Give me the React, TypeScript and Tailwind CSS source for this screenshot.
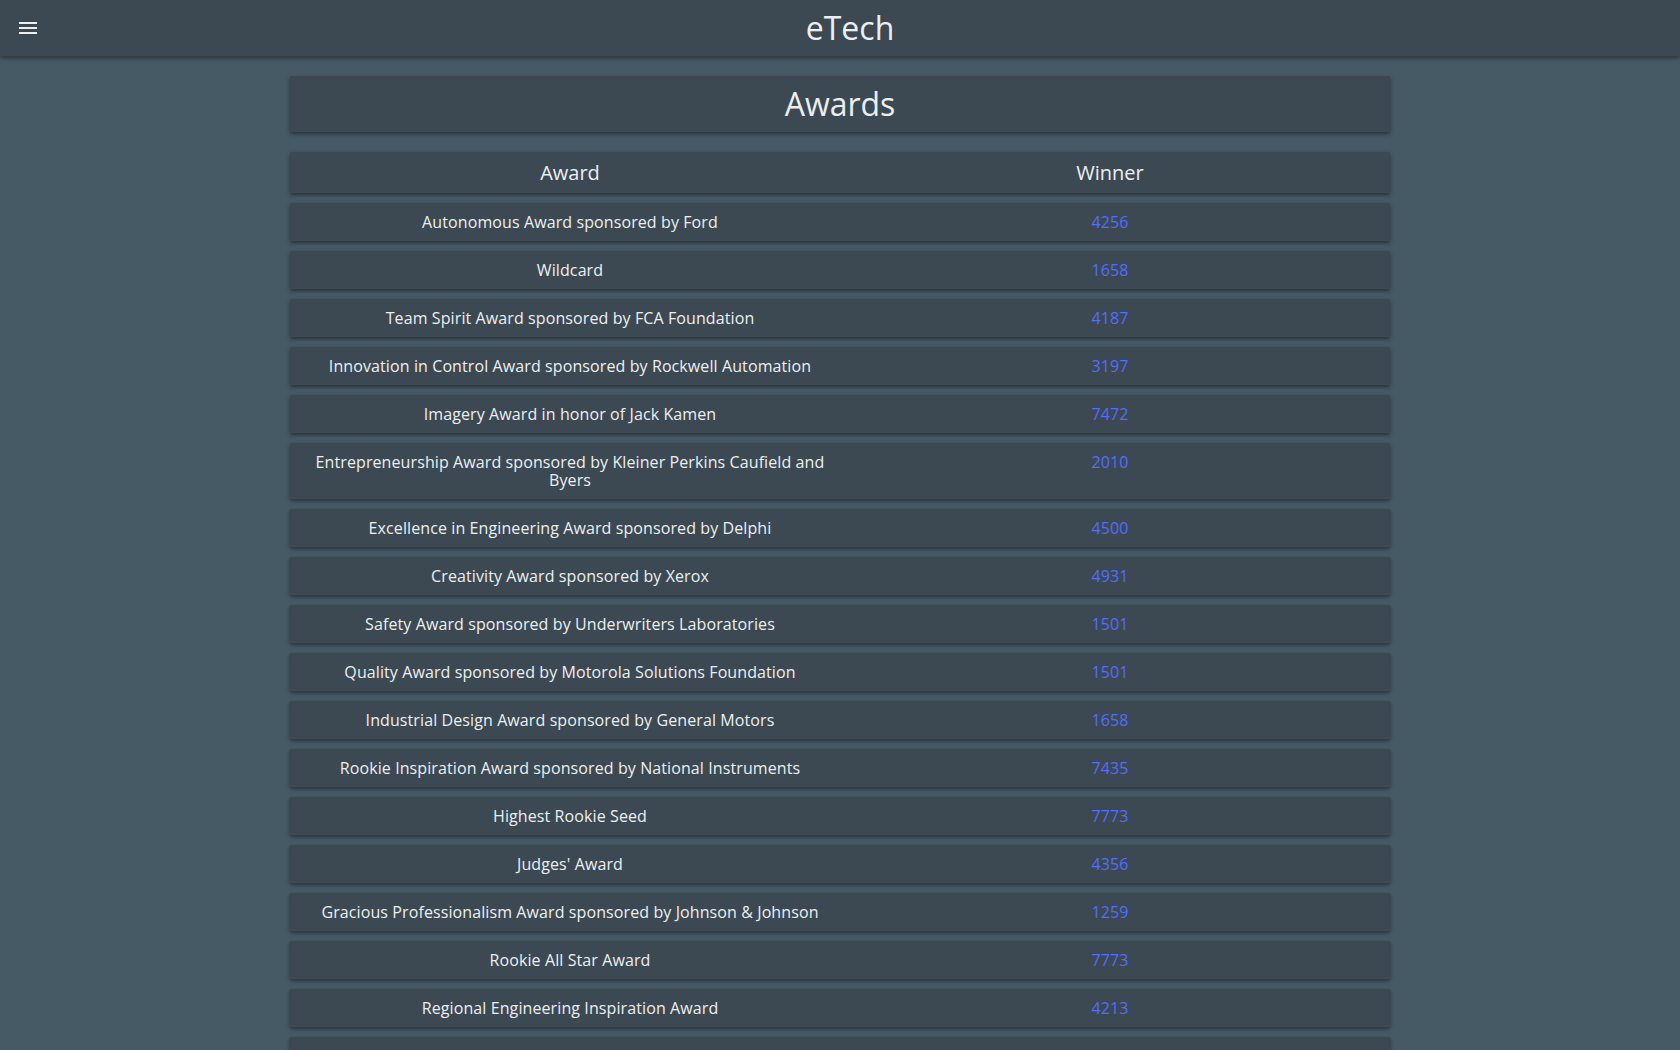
const awards = [
  { name: 'Autonomous Award sponsored by Ford', team: '4256' },
  { name: 'Wildcard', team: '1658' },
  { name: 'Team Spirit Award sponsored by FCA Foundation', team: '4187' },
  { name: 'Innovation in Control Award sponsored by Rockwell Automation', team: '3197' },
  { name: 'Imagery Award in honor of Jack Kamen', team: '7472' },
  { name: 'Entrepreneurship Award sponsored by Kleiner Perkins Caufield and Byers', team: '2010' },
  { name: 'Excellence in Engineering Award sponsored by Delphi', team: '4500' },
  { name: 'Creativity Award sponsored by Xerox', team: '4931' },
  { name: 'Safety Award sponsored by Underwriters Laboratories', team: '1501' },
  { name: 'Quality Award sponsored by Motorola Solutions Foundation', team: '1501' },
  { name: 'Industrial Design Award sponsored by General Motors', team: '1658' },
  { name: 'Rookie Inspiration Award sponsored by National Instruments', team: '7435' },
  { name: 'Highest Rookie Seed', team: '7773' },
  { name: "Judges' Award", team: '4356' },
  { name: 'Gracious Professionalism Award sponsored by Johnson & Johnson', team: '1259' },
  { name: 'Rookie All Star Award', team: '7773' },
  { name: 'Regional Engineering Inspiration Award', team: '4213' },
  { name: "Chairman's Award", team: '2619' },
  { name: 'Regional Winners', team: '1501' },
  { name: 'Regional Winners', team: '4256' },
];

const card = 'bg-[#3c4952] shadow-[0_2px_4px_rgba(0,0,0,0.45)]';

export default function App() {
  return (
    <div className="min-h-screen bg-[#465a66] font-['Open_Sans',sans-serif] text-[#eceff1]">
      <header className="sticky top-0 z-40 flex h-14 items-center bg-[#3c4952] shadow-[0_2px_5px_rgba(0,0,0,0.45)]">
        <button type="button" aria-label="Open menu" className="flex h-14 w-14 items-center justify-center">
          {/* material "menu" icon */}
          <svg viewBox="0 0 24 24" className="h-6 w-6 fill-current">
            <path d="M3 18h18v-2H3v2zm0-5h18v-2H3v2zm0-7v2h18V6H3z" />
          </svg>
        </button>
        <h1 className="-ml-9 flex-1 text-center text-[32px] leading-none">eTech</h1>
      </header>

      <main className="mx-auto flex w-[1100px] flex-col gap-[10px] pt-5">
        <div className={`${card} mb-[10px] flex h-14 items-center justify-center text-[32px]`}>Awards</div>

        <div className={`${card} grid h-[41px] grid-cols-[560px_1fr] items-center text-xl`}>
          <div className="text-center">Award</div>
          <div className="pr-5 text-center">Winner</div>
        </div>

        {awards.map((a, i) => (
          <div
            key={i}
            className={`${card} grid grid-cols-[560px_1fr] py-[10px] text-base leading-[18px] tracking-[0.1px]`}
          >
            <div className="px-[14px] text-center">{a.name}</div>
            <div className="pr-5 text-center text-[#536dfe]">{a.team}</div>
          </div>
        ))}
      </main>
    </div>
  );
}
